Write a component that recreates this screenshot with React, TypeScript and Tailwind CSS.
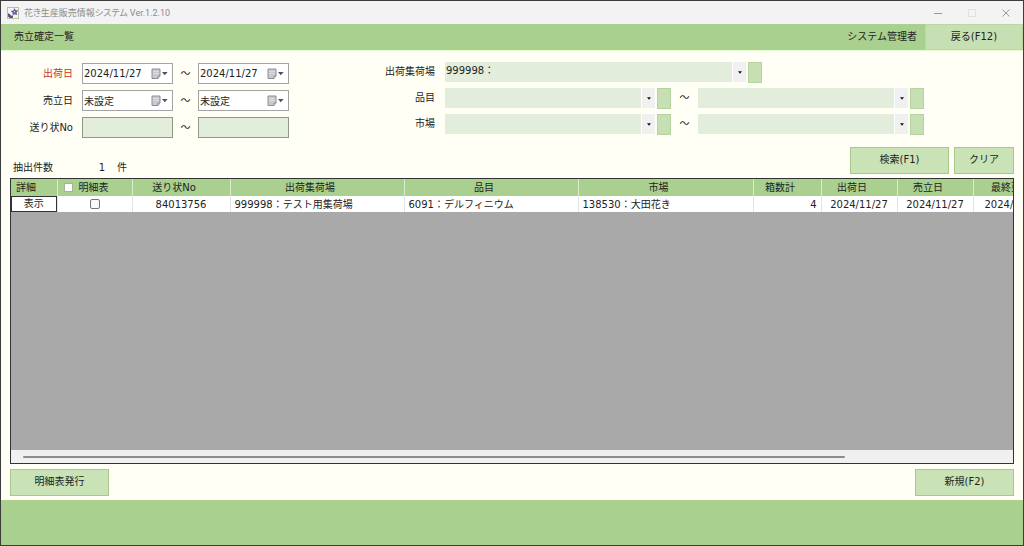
import { useState } from 'react';

const SANS = "font-['DejaVu_Sans','Noto_Sans_CJK_JP',sans-serif]";

function ActionButton({ children, className }: { children: string; className: string }) {
  return (
    <button
      type="button"
      className={`flex h-[27px] items-center justify-center border border-[#a9c98a] bg-[#c9e2b6] pb-0.5 hover:bg-[#d5eac6] ${className}`}
    >
      {children}
    </button>
  );
}

function Tilde({ className }: { className: string }) {
  return <span className={`shrink-0 text-center ${className}`}>～</span>;
}

function DateField({ label, value }: { label: string; value: string }) {
  return (
    <div className="flex h-[21px] w-[91px] items-center border border-[#a3a3a3] bg-white pr-1">
      <input
        aria-label={label}
        defaultValue={value}
        className="h-full w-0 flex-1 bg-transparent pl-px outline-none"
      />
      <button type="button" aria-label={`${label}を選択`} className="shrink-0">
        <svg width="17" height="12" viewBox="0 0 17 12" className="block">
          <path d="M1 1h8v7L7 10.500H1z" fill="#c9c9cf" stroke="#8d8d96" strokeLinejoin="round" />
          <path d="M9 8H7v2.500" fill="#f0f0f4" stroke="#77777f" strokeWidth="0.8" />
          <path d="M2 3.500h6M2 5.500h6" stroke="#dedee4" strokeWidth="0.8" />
          <path d="M11 4h5.600L13.800 7.200z" fill="#4a4f66" />
        </svg>
      </button>
    </div>
  );
}

function Picker({ label, value, className }: { label: string; value: string; className: string }) {
  return (
    <div className="flex gap-0.5">
      <div className={`relative h-5 ${className}`}>
        <select
          aria-label={label}
          defaultValue={value}
          className="block h-full w-full appearance-none bg-[#e2eedb] pl-px pr-4 pb-0.5 outline-none"
        >
          <option value={value}>{value}</option>
        </select>
        <span className="pointer-events-none absolute inset-y-0 right-0 flex w-3.5 items-center justify-center border-l border-white bg-[#f0f0f0]">
          <svg width="4" height="3" viewBox="0 0 4 3">
            <path d="M0 0.3h4L2 2.8z" fill="#111" />
          </svg>
        </span>
      </div>
      <button
        type="button"
        aria-label={`${label}を検索`}
        className="h-[21px] w-3.5 border border-[#b5d39e] bg-[#c6e0b4]"
      />
    </div>
  );
}

const dateRows = [
  { label: '出荷日', value: '2024/11/27', color: 'text-[#c8322c]' },
  { label: '売立日', value: '未設定', color: 'text-[#222]' },
];

const columns = [
  { title: '送り状No', width: 'w-[98px]', value: '84013756', cell: 'text-center' },
  { title: '出荷集荷場', width: 'w-[174px]', value: '999998：テスト用集荷場', cell: 'pl-1 text-left' },
  { title: '品目', width: 'w-[174px]', value: '6091：デルフィニウム', cell: 'pl-1 text-left' },
  { title: '市場', width: 'w-[175px]', value: '138530：大田花き', cell: 'pl-1 text-left' },
  { title: '箱数計', width: 'w-[68px]', value: '4', cell: 'pr-1 text-right' },
  { title: '出荷日', width: 'w-[76px]', value: '2024/11/27', cell: 'text-center' },
  { title: '売立日', width: 'w-[76px]', value: '2024/11/27', cell: 'text-center' },
  { title: '最終更新日', width: 'w-[100px]', value: '2024/11/27', cell: 'pl-[11px] text-left' },
];

export default function App() {
  const [all, setAll] = useState(false);
  const [row, setRow] = useState(false);

  return (
    <div
      className={`flex min-h-screen flex-col border border-[#3c3c3c] bg-[#fffff5] text-[10px] leading-[14px] text-[#222] ${SANS}`}
    >
      <div className="flex h-[23px] items-center justify-between bg-[#f3f3f3] pl-1.5">
        <div className="flex items-center gap-[5px]">
          <svg width="12" height="12" viewBox="0 0 12 12">
            <rect x="0.500" y="0.500" width="11" height="11" fill="#f6f6ee" stroke="#b4c59c" />
            <path
              d="M7.500 1l1 2 2.700.4-1.600 2 .7 2.700-2.500-.9-2.200 1.300.1-2.600L3.800 4l2.500-.6z"
              fill="#6f599f"
            />
            <circle cx="7.400" cy="4.700" r="0.8" fill="#d8cfe6" />
            <path d="M1 6.200l1.800.9 1.200 1.600 2-.1-.2 2.400H2.800L1 9.500z" fill="#5b4a86" />
          </svg>
          <h1 className="font-[Roboto,'Noto_Sans_CJK_JP',sans-serif] text-[9px] text-[#8b8b8b] [font-feature-settings:'palt']">
            花き生産販売情報システム Ver.1.2.10
          </h1>
        </div>
        <div className="flex h-full items-center text-[#9a9a9a]">
          <button type="button" aria-label="最小化" className="flex w-[34px] justify-center">
            <svg width="10" height="10" viewBox="0 0 10 10">
              <path d="M1 5.500h8" stroke="currentColor" />
            </svg>
          </button>
          <button type="button" aria-label="最大化" className="flex w-[34px] justify-center text-[#e2e2e2]">
            <svg width="10" height="10" viewBox="0 0 10 10">
              <rect x="1.500" y="1.500" width="7" height="7" fill="none" stroke="currentColor" />
            </svg>
          </button>
          <button type="button" aria-label="閉じる" className="flex w-[34px] justify-center">
            <svg width="10" height="10" viewBox="0 0 10 10">
              <path d="M1.500 1.500l7 7M8.500 1.500l-7 7" stroke="currentColor" />
            </svg>
          </button>
        </div>
      </div>

      <header className="flex h-[26px] items-center justify-between bg-[#a9d08e] pl-[13px]">
        <h2>売立確定一覧</h2>
        <div className="flex h-full items-center gap-2">
          <span>システム管理者</span>
          <button
            type="button"
            className="h-full w-[98px] border border-[#b9d8a2] bg-[#c6e0b4] hover:bg-[#d5eac6]"
          >
            戻る(F12)
          </button>
        </div>
      </header>

      <main className="flex flex-1 flex-col border-t border-[#e2fbcf] px-[9px] pb-1">
        <form className="flex pt-[11px]" onSubmit={(e) => e.preventDefault()}>
          <div className="flex flex-col gap-1.5 pt-px">
            {dateRows.map((r) => (
              <div key={r.label} role="group" aria-label={r.label} className="flex items-center">
                <span className={`w-[72px] pr-[9px] text-right ${r.color}`}>{r.label}</span>
                <DateField label={`${r.label}（開始）`} value={r.value} />
                <Tilde className="w-[25px]" />
                <DateField label={`${r.label}（終了）`} value={r.value} />
              </div>
            ))}
            <div className="flex items-center">
              <label htmlFor="slip" className="w-[72px] pr-[9px] text-right">
                送り状No
              </label>
              <input id="slip" className="h-[21px] w-[91px] border border-[#8f9a86] bg-[#e2eedb] px-0.5 outline-none" />
              <Tilde className="w-[25px]" />
              <input
                aria-label="送り状No（終了）"
                className="h-[21px] w-[91px] border border-[#8f9a86] bg-[#e2eedb] px-0.5 outline-none"
              />
            </div>
          </div>

          <div className="flex flex-col gap-[5px]">
            <div className="flex">
              <span className="w-[156px] pt-[3px] pr-2.5 text-right">出荷集荷場</span>
              <Picker label="出荷集荷場" value="999998：" className="w-[301px]" />
            </div>
            {['品目', '市場'].map((name) => (
              <div key={name} className="flex">
                <span className="w-[156px] pt-[3px] pr-2.5 text-right">{name}</span>
                <Picker label={`${name}（開始）`} value="" className="w-[210px]" />
                <Tilde className="w-[27px] pt-[3px]" />
                <Picker label={`${name}（終了）`} value="" className="w-[210px]" />
              </div>
            ))}
          </div>
        </form>

        <div className="mt-[9px] flex items-end justify-between">
          <p className="flex pl-[3px] leading-3">
            <span className="w-[82px]">抽出件数</span>
            <span className="w-2.5 text-right">1</span>
            <span className="pl-3">件</span>
          </p>
          <div className="flex gap-[5px]">
            <ActionButton className="w-[99px]">検索(F1)</ActionButton>
            <ActionButton className="w-[60px]">クリア</ActionButton>
          </div>
        </div>

        <section className="mt-1 flex flex-1 flex-col border border-[#333] bg-[#a9a9a9]">
          <div className="grow overflow-hidden">
            <table className="w-[1062px] table-fixed border-collapse">
              <thead>
                <tr className="h-[17px] bg-[#a9d08e]">
                  <th className="w-[46px] border-r border-[#dcebd0] p-0 pl-[5px] text-left font-normal">詳細</th>
                  <th className="w-[75px] border-r border-[#dcebd0] p-0 font-normal">
                    <label className="flex items-center gap-1.5 pl-1.5">
                      <input
                        type="checkbox"
                        checked={all}
                        onChange={(e) => {
                          setAll(e.target.checked);
                          setRow(e.target.checked);
                        }}
                        className="size-[9px] appearance-none border border-[#a3b596] bg-white checked:bg-[#3f6f2a]"
                      />
                      明細表
                    </label>
                  </th>
                  {columns.map((c, i) => (
                    <th key={i} className={`border-r border-[#dcebd0] p-0 pr-3.5 font-normal ${c.width}`}>
                      {c.title}
                    </th>
                  ))}
                </tr>
              </thead>
              <tbody>
                <tr className="h-4 bg-white">
                  <td className="border-r border-[#e4e4e4] p-0">
                    <button type="button" className="block h-4 w-full border border-[#333] bg-white leading-3">
                      表示
                    </button>
                  </td>
                  <td className="border-r border-[#e4e4e4] p-0">
                    <input
                      type="checkbox"
                      aria-label="明細表"
                      checked={row}
                      onChange={(e) => setRow(e.target.checked)}
                      className="mx-auto block size-[10px] appearance-none rounded-xs border border-[#777] bg-[#fafafa] checked:bg-[#3f6f2a]"
                    />
                  </td>
                  {columns.map((c, i) => (
                    <td key={i} className={`whitespace-nowrap border-r border-[#e4e4e4] p-0 pt-px ${c.cell}`}>
                      {c.value}
                    </td>
                  ))}
                </tr>
              </tbody>
            </table>
          </div>
          <div className="flex h-[13px] items-center bg-[#f0f0f0] pl-3">
            <div className="h-0.5 w-[83%] rounded-full bg-[#8c8c8c]" />
          </div>
        </section>

        <div className="mt-[5px] flex justify-between">
          <ActionButton className="w-[99px]">明細表発行</ActionButton>
          <ActionButton className="w-[99px]">新規(F2)</ActionButton>
        </div>
      </main>

      <footer className="h-[45px] bg-[#a9d08e]" />
    </div>
  );
}
